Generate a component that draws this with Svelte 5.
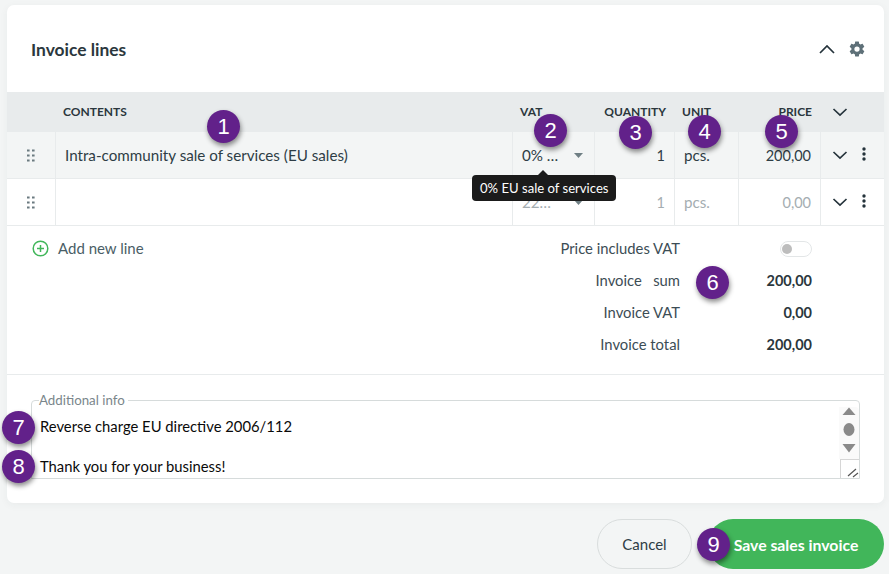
<script>
  const lines = [
    { name: 'Intra-community sale of services (EU sales)', vat: '0% …', qty: '1', unit: 'pcs.', price: '200,00', active: true },
    { name: '', vat: '22…', qty: '1', unit: 'pcs.', price: '0,00', active: false }
  ];

  const totals = [
    { label: 'Invoice   sum', value: '200,00' },
    { label: 'Invoice VAT', value: '0,00' },
    { label: 'Invoice total', value: '200,00' }
  ];

  const badges = [
    { n: 1, x: 223, y: 126 },
    { n: 2, x: 550, y: 130 },
    { n: 3, x: 635, y: 132 },
    { n: 4, x: 704, y: 131 },
    { n: 5, x: 781, y: 131 },
    { n: 6, x: 712, y: 282 },
    { n: 7, x: 18, y: 427 },
    { n: 8, x: 18, y: 466 },
    { n: 9, x: 713, y: 544 }
  ];
</script>

<div class="page">
  <section class="card">
    <header class="card-head">
      <h2>Invoice lines</h2>
      <svg class="chev-up" width="18" height="12" viewBox="0 0 18 12"><path d="M2 10 L9 3 L16 10" /></svg>
      <svg class="gear" width="18" height="18" viewBox="0 0 24 24"><path d="M19.4 13c.04-.33.06-.66.06-1s-.02-.67-.06-1l2.1-1.65c.19-.15.24-.42.12-.64l-2-3.46c-.12-.22-.38-.3-.6-.22l-2.49 1c-.52-.4-1.08-.73-1.69-.98l-.38-2.65A.49.49 0 0 0 14 2h-4c-.25 0-.46.18-.49.42l-.38 2.65c-.61.25-1.17.59-1.69.98l-2.49-1c-.23-.09-.49 0-.6.22l-2 3.46c-.13.22-.07.49.12.64L4.57 11c-.04.33-.07.67-.07 1s.03.67.07 1l-2.1 1.65c-.19.15-.25.42-.12.64l2 3.46c.12.22.38.3.6.22l2.49-1c.52.4 1.08.73 1.69.98l.38 2.65c.03.24.24.42.49.42h4c.25 0 .46-.18.49-.42l.38-2.65c.61-.25 1.17-.59 1.69-.98l2.49 1c.23.09.49 0 .6-.22l2-3.46c.12-.22.07-.49-.12-.64L19.4 13zM12 15.5a3.5 3.5 0 1 1 0-7 3.5 3.5 0 0 1 0 7z" /></svg>
    </header>

    <div class="row thead">
      <div></div>
      <div class="th">CONTENTS</div>
      <div class="th">VAT</div>
      <div class="th right">QUANTITY</div>
      <div class="th">UNIT</div>
      <div class="th right">PRICE</div>
      <div class="th act"><svg class="chev" width="16" height="10" viewBox="0 0 16 10"><path d="M1.5 2 L8 8 L14.5 2" /></svg></div>
    </div>

    {#each lines as line}
      <div class="row line" class:active={line.active}>
        <div class="cell grip">
          <svg width="8" height="13" viewBox="0 0 8 13">
            {#each [0.5, 5.5, 10.5] as cy}
              <rect x="0" y={cy} width="2.6" height="2" />
              <rect x="5" y={cy} width="2.6" height="2" />
            {/each}
          </svg>
        </div>
        <div class="cell name">{line.name}</div>
        <div class="cell vat">
          <span>{line.vat}</span>
          <svg class="caret" width="9" height="5" viewBox="0 0 9 5"><path d="M0 0 H9 L4.5 5 Z" /></svg>
        </div>
        <div class="cell num qty">{line.qty}</div>
        <div class="cell unit">{line.unit}</div>
        <div class="cell num">{line.price}</div>
        <div class="cell act">
          <svg class="chev" width="16" height="10" viewBox="0 0 16 10"><path d="M1.5 2 L8 8 L14.5 2" /></svg>
          <svg class="dots" width="4" height="14" viewBox="0 0 4 14"><circle cx="2" cy="2" r="1.7" /><circle cx="2" cy="7" r="1.7" /><circle cx="2" cy="12" r="1.7" /></svg>
        </div>
      </div>
    {/each}

    <div class="summary">
      <div class="add">
        <svg width="17" height="17" viewBox="0 0 17 17"><circle cx="8.5" cy="8.5" r="7.3" /><path d="M8.5 5 V12 M5 8.5 H12" /></svg>
        <span>Add new line</span>
      </div>
      <div class="totals">
        <div class="total-row">
          <span class="label">Price includes VAT</span>
          <span class="value"><span class="toggle"><i></i></span></span>
        </div>
        {#each totals as t}
          <div class="total-row">
            <span class="label">{t.label}</span>
            <span class="value">{t.value}</span>
          </div>
        {/each}
      </div>
    </div>

    <div class="info-wrap">
      <fieldset class="info">
        <legend>Additional info</legend>
        <div class="info-text">Reverse charge EU directive 2006/112<br /><br />Thank you for your business!</div>
        <div class="scroll">
          <svg width="20" height="52" viewBox="0 0 20 52">
            <path d="M3.5 8 L10 0.5 L16.5 8 Z" />
            <ellipse cx="10" cy="22.5" rx="5.5" ry="6.5" />
            <path d="M3.5 37 H16.5 L10 45.5 Z" />
          </svg>
        </div>
        <div class="resizer">
          <svg width="19" height="19" viewBox="0 0 19 19"><path d="M7 16 L15 9 M12 17 L17 13" /></svg>
        </div>
      </fieldset>
    </div>
  </section>

  <footer class="actions">
    <button class="cancel">Cancel</button>
    <button class="save">Save sales invoice</button>
  </footer>

  <div class="tooltip">0% EU sale of services</div>

  {#each badges as b}
    <span class="badge" style="left:{b.x - 16}px; top:{b.y - 16}px">{b.n}</span>
  {/each}
</div>

<style>
  :global(body) {
    margin: 0;
    background: #f3f5f5;
    font-family: "Lato", "Noto Sans", sans-serif;
    color: #2e3d45;
  }

  .page {
    position: relative;
    width: 889px;
    height: 574px;
    box-sizing: border-box;
    padding: 5px 5px 0 7px;
    overflow: hidden;
  }

  .card {
    background: #fff;
    border-radius: 7px;
    height: 498px;
    box-shadow: 0 2px 8px rgba(40, 60, 60, 0.05);
    overflow: hidden;
  }

  .card-head {
    display: flex;
    align-items: center;
    height: 87px;
    padding: 0 18px 0 24px;
    gap: 12px;
  }

  h2 {
    margin: 2px auto 0 0;
    font-size: 17.4px;
    font-weight: 700;
    color: #2b373d;
  }

  .chev-up path, .chev path {
    fill: none;
    stroke: #25333b;
    stroke-width: 1.7;
  }

  .gear path {
    fill: #5e7078;
  }

  .row {
    display: grid;
    grid-template-columns: 48px 457px 82px 80px 64px 82px 63px;
  }

  .thead {
    height: 40px;
    background: #e8ebec;
    align-items: center;
  }

  .th {
    font-size: 12px;
    font-weight: 700;
    color: #2b373d;
    padding: 0 8px;
    position: relative;
    top: -1px;
  }

  .th.right {
    text-align: right;
  }

  .line {
    height: 47px;
    border-bottom: 1px solid #e8ebec;
    box-sizing: border-box;
    font-size: 15.2px;
  }

  .line.active {
    background: #f3f5f5;
  }

  .line:not(.active) .vat span,
  .line:not(.active) .qty,
  .line:not(.active) .unit,
  .line:not(.active) .num {
    color: #a4adb1;
  }

  .cell {
    display: flex;
    align-items: center;
    border-left: 1px solid #e8ebec;
    padding: 0 9px;
    min-width: 0;
  }

  .grip {
    border-left: 0;
    justify-content: center;
    padding: 0;
  }

  .grip rect {
    fill: #6b7a80;
  }

  .vat {
    justify-content: space-between;
    padding-right: 11px;
  }

  .caret path {
    fill: #6f7f84;
  }

  .num {
    justify-content: flex-end;
    font-size: 14.5px;
  }

  .act {
    justify-content: flex-start;
    padding: 0 0 0 11px;
    gap: 14px;
  }

  .th.act {
    padding-left: 12px;
    display: flex;
    align-items: center;
    top: 0;
    border: 0;
  }

  .dots {
    fill: #25333b;
    position: relative;
    top: -1px;
  }

  .summary {
    display: flex;
    justify-content: space-between;
    height: 142px;
    padding: 6px 0 0 25px;
    border-bottom: 1px solid #e8ebec;
  }

  .add {
    display: flex;
    align-items: center;
    gap: 9px;
    height: 32px;
    font-size: 15px;
    color: #4a5e66;
  }

  .add circle, .add path {
    fill: none;
    stroke: #41b65a;
    stroke-width: 1.5;
  }

  .totals {
    display: flex;
    flex-direction: column;
    padding-right: 72px;
  }

  .total-row {
    display: flex;
    justify-content: flex-end;
    align-items: center;
    height: 32px;
    font-size: 14.8px;
  }

  .label {
    white-space: pre;
    color: #3c4d55;
  }

  .value {
    width: 132px;
    text-align: right;
    font-size: 14.5px;
    font-weight: 700;
    color: #2b373d;
  }

  .toggle {
    display: inline-block;
    position: relative;
    vertical-align: middle;
    width: 30px;
    height: 14px;
    border: 1px solid #e3e6e7;
    border-radius: 9px;
  }

  .toggle i {
    position: absolute;
    left: 1px;
    top: 2px;
    width: 10px;
    height: 10px;
    border-radius: 50%;
    background: #bdbdbd;
  }

  .info-wrap {
    padding: 18px 24px 0 24px;
  }

  .info {
    position: relative;
    margin: 0;
    padding: 0 8px;
    height: 86px;
    box-sizing: border-box;
    border: 1px solid #d6dbdb;
    border-radius: 4px 4px 0 0;
    overflow: hidden;
  }

  legend {
    font-size: 13.3px;
    color: #7a868b;
    padding: 0 3px 0 0;
    margin-left: -1px;
    line-height: 14px;
  }

  .info-text {
    font-size: 14.8px;
    line-height: 20px;
    color: #0a0a0a;
    padding-top: 9px;
    white-space: nowrap;
  }

  .scroll {
    position: absolute;
    right: 0;
    top: 0;
    width: 20px;
    height: 52px;
    background: #fafafa;
  }

  .scroll svg {
    fill: #8a8a8a;
    display: block;
  }

  .resizer {
    position: absolute;
    right: 0;
    bottom: 0;
    width: 18px;
    height: 18px;
    border: 1px solid #d6d6d6;
    border-width: 1px 0 0 1px;
    background: #fff;
  }

  .resizer path {
    fill: none;
    stroke: #555;
    stroke-width: 1.2;
  }

  .actions {
    display: flex;
    justify-content: flex-end;
    gap: 16px;
    margin-top: 16px;
  }

  button {
    height: 50px;
    border-radius: 25px;
    font-family: inherit;
    font-size: 15px;
  }

  .cancel {
    width: 95px;
    background: #f3f5f5;
    border: 1px solid #d9dddd;
    color: #2e3d45;
  }

  .save {
    width: 176px;
    background: #41b65a;
    border: 0;
    color: #fff;
    font-size: 15.8px;
    font-weight: 700;
  }

  .tooltip {
    position: absolute;
    left: 472px;
    top: 175px;
    height: 26px;
    line-height: 26px;
    padding: 0 8px;
    width: 144px;
    box-sizing: border-box;
    text-align: center;
    white-space: nowrap;
    background: #1b1b1b;
    color: #fff;
    font-size: 13.1px;
    border-radius: 4px;
  }

  .tooltip::before {
    content: '';
    position: absolute;
    left: 66px;
    top: -5px;
    border: 5px solid transparent;
    border-top: 0;
    border-bottom-color: #1b1b1b;
  }

  .badge {
    position: absolute;
    width: 33px;
    height: 33px;
    line-height: 33px;
    text-align: center;
    border-radius: 50%;
    background: #62218a;
    color: #fff;
    font-family: "Liberation Sans", sans-serif;
    font-size: 22px;
    box-shadow: 1px 3px 5px rgba(0, 0, 0, 0.45);
  }
</style>
